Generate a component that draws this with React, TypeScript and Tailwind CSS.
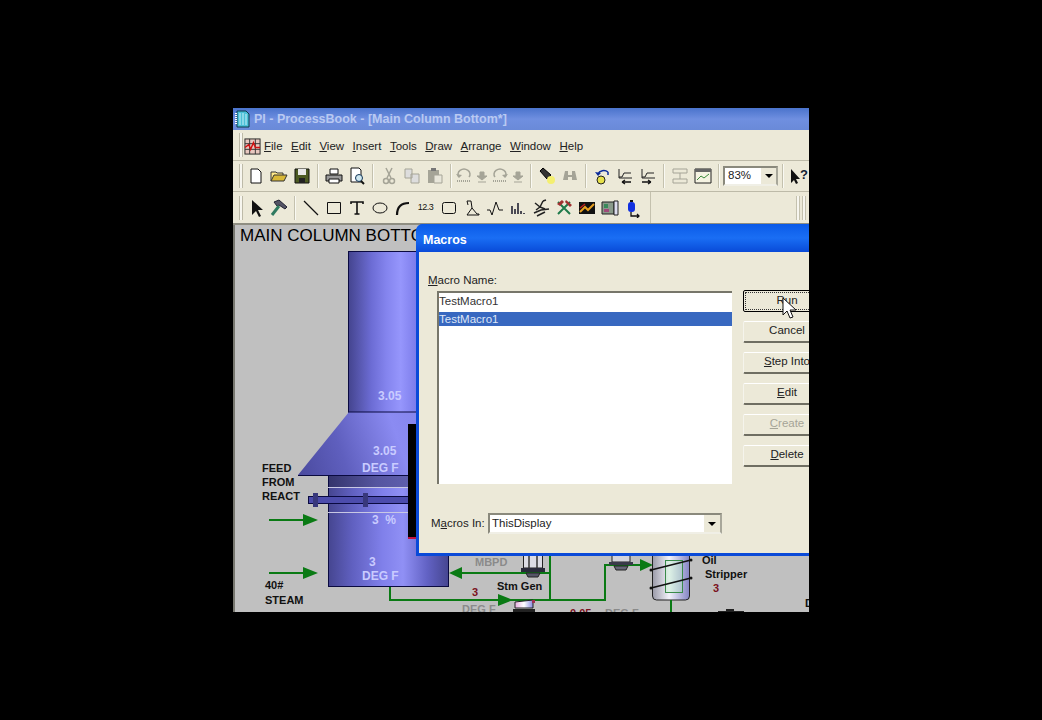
import type { ReactNode } from "react";

const ui = { fontFamily: '"Liberation Sans", sans-serif' };

function Slot({ children, narrow }: { children: ReactNode; narrow?: boolean }) {
  return (
    <div className={`${narrow ? "w-[18px]" : "w-[23px]"} h-[23px] flex items-center justify-center shrink-0`}>
      <svg width={narrow ? 16 : 20} height="20" viewBox={narrow ? "2 0 16 20" : "0 0 20 20"}>
        {children}
      </svg>
    </div>
  );
}

function Sep({ narrow }: { narrow?: boolean }) {
  return (
    <div className={`${narrow ? "w-[8px]" : "w-[9px]"} h-[24px] flex justify-center shrink-0`}>
      <div className="w-[2px] h-full border-l border-[#c4c1ae] bg-white/70" />
    </div>
  );
}

function Grip() {
  return <div className="w-[4px] h-[24px] ml-[6px] mr-[1px] border-x border-[#bdbaa8] bg-white/60 shrink-0" />;
}

const gray = "#a5a497";

const row1: ReactNode[] = [
  <Slot key="new">
    <path d="M5 3h7l3 3v11H5z" fill="#fff" stroke="#111" />
  </Slot>,
  <Slot key="open">
    <path d="M2 15V6h5l1 1h6v2" fill="#ffe98a" stroke="#333" />
    <path d="M2 15l3-6h13l-3 6z" fill="#d8b838" stroke="#333" />
  </Slot>,
  <Slot key="save">
    <path d="M3 3h14v14H3z" fill="#4c5a22" stroke="#111" />
    <path d="M6 3h8v6H6z" fill="#e8e8e8" />
    <path d="M7 12h6v5H7z" fill="#222" />
  </Slot>,
  "sep",
  <Slot key="print">
    <path d="M6 3h8v5H6z" fill="#fff" stroke="#111" />
    <path d="M2 9h16v6H2z" fill="#999" stroke="#111" />
    <path d="M5 13h10v4H5z" fill="#fff" stroke="#111" />
  </Slot>,
  <Slot key="preview">
    <path d="M4 2h8l2 2v12H4z" fill="#fff" stroke="#111" />
    <circle cx="12" cy="12" r="3.5" fill="#cfe8f0" stroke="#135" />
    <path d="M14 15l3 3" stroke="#111" strokeWidth="2" />
  </Slot>,
  "sep",
  <Slot key="cut">
    <path d="M7 2l5 10M13 2l-5 10" stroke={gray} strokeWidth="1.5" />
    <circle cx="7" cy="15" r="2.5" fill="none" stroke={gray} strokeWidth="1.5" />
    <circle cx="13" cy="15" r="2.5" fill="none" stroke={gray} strokeWidth="1.5" />
  </Slot>,
  <Slot key="copy">
    <path d="M3 3h7v9H3zM9 8h8v9H9z" fill="#ddd" stroke={gray} />
  </Slot>,
  <Slot key="paste">
    <path d="M3 4h11v13H3z" fill={gray} />
    <path d="M6 2h5v3H6z" fill="#777" />
    <path d="M9 9h8v8H9z" fill="#e8e6da" stroke={gray} />
  </Slot>,
  "sep",
  <Slot key="undo" narrow>
    <path d="M5 11a6 5 0 1 1 10 0" fill="none" stroke={gray} strokeWidth="1.5" />
    <path d="M2 8l3 4 3-3z" fill={gray} />
    <path d="M3 15h14" stroke={gray} strokeDasharray="1 1" strokeWidth="2" />
  </Slot>,
  <Slot key="undo2" narrow>
    <path d="M8 6h4v4h3l-5 4-5-4h3zM6 16h8" fill={gray} stroke={gray} />
  </Slot>,
  <Slot key="redo" narrow>
    <path d="M5 11a6 5 0 1 1 10 0" fill="none" stroke={gray} strokeWidth="1.5" />
    <path d="M18 8l-3 4-3-3z" fill={gray} />
    <path d="M3 15h14" stroke={gray} strokeDasharray="1 1" strokeWidth="2" />
  </Slot>,
  <Slot key="redo2" narrow>
    <path d="M8 6h4v4h3l-5 4-5-4h3zM6 16h8" fill={gray} stroke={gray} />
  </Slot>,
  "sep8",
  <Slot key="torch">
    <path d="M3 5l3-3 8 7-4 4z" fill="#333" stroke="#000" />
    <circle cx="14" cy="14" r="4" fill="#f4ef70" />
  </Slot>,
  <Slot key="binoculars">
    <path d="M5 5h3v4h4V5h3l2 9h-5v-3H8v3H3z" fill={gray} />
  </Slot>,
  "sep",
  <Slot key="trend">
    <path d="M6 8a6 5 0 0 1 10-2M16 6v3" fill="none" stroke="#0a2a9a" strokeWidth="1.5" />
    <path d="M3 6l3 4 3-3z" fill="#0a2a9a" />
    <circle cx="9" cy="14" r="4" fill="#e6e04a" stroke="#222" />
  </Slot>,
  <Slot key="back">
    <path d="M4 12V3M4 11h3l2-4h7M4 12h13" fill="none" stroke="#222" />
    <path d="M7 16h9M7 16l3-2M7 16l3 2" stroke="#111" fill="none" strokeWidth="1.3" />
  </Slot>,
  <Slot key="fwd">
    <path d="M4 12V3M4 11h3l2-4h7M4 12h13" fill="none" stroke="#222" />
    <path d="M4 16h9M13 16l-3-2M13 16l-3 2" stroke="#111" fill="none" strokeWidth="1.3" />
  </Slot>,
  "sep",
  <Slot key="align">
    <path d="M3 3h14v4H3zM3 13h14v4H3zM10 7v6" fill="none" stroke={gray} />
  </Slot>,
  <Slot key="chart">
    <path d="M2 3h16v14H2z" fill="#f5f3e2" stroke="#222" />
    <path d="M2 3h16v3H2z" fill="#666" />
    <path d="M4 14l4-4 3 2 5-4" fill="none" stroke="#3a8a3a" />
  </Slot>,
];

const row2: ReactNode[] = [
  <Slot key="pointer">
    <path d="M6 2v15l4-4 3 6 2-1-3-6h5z" fill="#111" />
  </Slot>,
  <Slot key="hammer">
    <path d="M5 4l5-2 8 7-2 2-6-4-2 1z" fill="#556" stroke="#223" />
    <path d="M10 8l-7 9" stroke="#2f7a60" strokeWidth="3" />
  </Slot>,
  "sep",
  <Slot key="line">
    <path d="M3 3l14 14" stroke="#111" strokeWidth="1.3" />
  </Slot>,
  <Slot key="rect">
    <path d="M3.500 4.500h13v11h-13z" fill="none" stroke="#111" />
  </Slot>,
  <Slot key="text">
    <path d="M4 6V4h12v2M10 4v12M7.500 16h5" fill="none" stroke="#111" strokeWidth="1.6" />
  </Slot>,
  <Slot key="ellipse">
    <ellipse cx="10" cy="10" rx="7" ry="5" fill="none" stroke="#111" />
  </Slot>,
  <Slot key="arc">
    <path d="M4 17C4 9 8 5 16 5" fill="none" stroke="#111" strokeWidth="2.2" />
  </Slot>,
  <div key="num" className="w-[23px] h-[23px] flex items-center justify-center shrink-0 text-[9px] text-[#111] tracking-[-0.5px]">
    12.3
  </div>,
  <Slot key="rrect">
    <rect x="3.500" y="4.500" width="13" height="11" rx="2" fill="none" stroke="#111" />
  </Slot>,
  <Slot key="conn">
    <path d="M5 3h4l1 7 5 6h2v1H5l5-7M5 3l1 4" fill="none" stroke="#111" />
  </Slot>,
  <Slot key="wave">
    <path d="M2 12h3l2 5 4-13 3 8h4" fill="none" stroke="#111" />
  </Slot>,
  <Slot key="bars">
    <path d="M4 16V8M7 16v-5M10 16V5M13 16v-3M16 16v-1" stroke="#223" strokeWidth="1.6" />
  </Slot>,
  <Slot key="run">
    <path d="M4 5l5 4M9 9l3-6M9 9l-4 3M9 9l5 2M12 3l3-1M3 15l7-3 8-1M6 18l8-4" fill="none" stroke="#222" strokeWidth="1.5" />
  </Slot>,
  <Slot key="tools">
    <path d="M4 4l12 12M16 4L4 16" stroke="#1e7a4a" strokeWidth="2" />
    <path d="M3 6l5-4 2 2-4 4zM12 2l6 5-2 2-5-5z" fill="#a03030" />
  </Slot>,
  <Slot key="trendbox">
    <path d="M2 4h16v12H2z" fill="#111" />
    <path d="M3 14l5-5 3 3 6-6" fill="none" stroke="#e8a020" strokeWidth="2" />
    <path d="M3 10l5-4" stroke="#c02020" strokeWidth="1.5" />
  </Slot>,
  <Slot key="pics">
    <path d="M2 4h12v12H2z" fill="#8a9a8a" stroke="#222" />
    <path d="M4 6h4v4H4z" fill="#3a8a5a" />
    <path d="M4 11h5v3H4z" fill="#a04a7a" />
    <path d="M14 3h4v14h-4z" fill="#dde" stroke="#222" />
  </Slot>,
  <Slot key="tag">
    <path d="M7 2h3v2H7z" fill="#111" />
    <rect x="5" y="4" width="7" height="10" rx="3" fill="#1030e0" />
    <path d="M8 14v4h8M14 16l2 2-2 2" fill="none" stroke="#111" strokeWidth="1.3" />
  </Slot>,
];

function Row({ items }: { items: ReactNode[] }) {
  return (
    <>
      {items.map((item, i) =>
        item === "sep" ? <Sep key={i} /> : item === "sep8" ? <Sep key={i} narrow /> : item
      )}
    </>
  );
}

function Btn({
  accent,
  rest,
  disabled,
  focus,
}: {
  accent: string;
  rest: string;
  disabled?: boolean;
  focus?: boolean;
}) {
  return (
    <div
      className={`w-[88px] h-[22px] rounded-[2px] flex items-center justify-center text-[11.5px] shrink-0 ${
        focus
          ? "border border-black p-[1px]"
          : "pb-[2px] border-b-2 border-b-[#6f6e62] border-t border-t-white border-x border-x-[#f5f4ec]"
      } ${disabled ? "text-[#a5a497]" : "text-[#222]"}`}
    >
      <div className={`w-full h-full flex items-center justify-center ${focus ? "border border-dotted border-[#333]" : ""}`}>
        <span>
          <span className="underline">{accent}</span>
          {rest}
        </span>
      </div>
    </div>
  );
}

function Diagram() {
  const labelWhite = { fill: "#c9cbff", fontWeight: 700, fontSize: 12 };
  const labelBlack = { fill: "#111", fontWeight: 700, fontSize: 11 };
  const grayLabel = { fill: "#8a8a8a", fontWeight: 700, fontSize: 11 };
  const redLabel = { fill: "#7a1020", fontWeight: 700, fontSize: 11 };
  const green = "#0a7a14";
  return (
    <svg
      className="absolute left-0 top-0"
      width="576"
      height="387"
      viewBox="233 225 576 387"
      style={{ fontFamily: '"Liberation Sans", sans-serif' }}
    >
      <defs>
        <linearGradient id="col" gradientUnits="userSpaceOnUse" x1="349" x2="438" y1="0" y2="0">
          <stop offset="0" stopColor="#454590" />
          <stop offset="0.12" stopColor="#5858b0" />
          <stop offset="0.25" stopColor="#6c6cd4" />
          <stop offset="0.42" stopColor="#8484ee" />
          <stop offset="0.58" stopColor="#9696fc" />
          <stop offset="0.76" stopColor="#7c7cea" />
          <stop offset="1" stopColor="#5c5cc0" />
        </linearGradient>
        <linearGradient id="low" gradientUnits="userSpaceOnUse" x1="328" x2="449" y1="0" y2="0">
          <stop offset="0" stopColor="#45458f" />
          <stop offset="0.2" stopColor="#6060c0" />
          <stop offset="0.45" stopColor="#8080ea" />
          <stop offset="0.62" stopColor="#9090f5" />
          <stop offset="0.82" stopColor="#6262c4" />
          <stop offset="1" stopColor="#45458f" />
        </linearGradient>
        <linearGradient id="band" x1="0" x2="1" y1="0" y2="0">
          <stop offset="0" stopColor="#34346c" />
          <stop offset="0.4" stopColor="#55559f" />
          <stop offset="1" stopColor="#6a6ac0" />
        </linearGradient>
        <linearGradient id="cone" gradientUnits="userSpaceOnUse" x1="298" x2="480" y1="475" y2="412">
          <stop offset="0" stopColor="#4a4a9e" />
          <stop offset="0.25" stopColor="#5f5fbe" />
          <stop offset="0.55" stopColor="#8b8bf2" />
          <stop offset="1" stopColor="#7a7ae0" />
        </linearGradient>
        <linearGradient id="strip" x1="0" x2="1" y1="0" y2="0">
          <stop offset="0" stopColor="#9a9aa8" />
          <stop offset="0.45" stopColor="#f2f2fa" />
          <stop offset="1" stopColor="#8484c4" />
        </linearGradient>
        <linearGradient id="tanker" x1="0" x2="1" y1="0" y2="0">
          <stop offset="0" stopColor="#e8b0e0" />
          <stop offset="0.5" stopColor="#ffffff" />
          <stop offset="1" stopColor="#8888e0" />
        </linearGradient>
      </defs>

      <rect x="348.500" y="251.500" width="90" height="161" fill="url(#col)" stroke="#0a0a40" />
      <path d="M349 412 L298 475 H500 L450 412 Z" fill="url(#cone)" />
      <path d="M349 412H450" stroke="#0a0a40" />
      <rect x="328.500" y="475.500" width="120" height="111" fill="url(#low)" stroke="#0a0a40" />
      <rect x="329" y="476" width="119" height="11" fill="url(#band)" />
      <path d="M298 475.500H450" stroke="#0a0a40" />
      <path d="M328 487.500H410M328 512.500H410" stroke="#c8c8e4" />
      <rect x="308.500" y="496.500" width="100" height="7" fill="#4c4cac" stroke="#0a0a40" />
      <rect x="313" y="493" width="5" height="14" fill="#38387c" />
      <rect x="363" y="493" width="5" height="14" fill="#38387c" />
      <rect x="408" y="424" width="10" height="113" fill="#000" />
      <rect x="408" y="537" width="10" height="2" fill="#c01040" />

      <text x="378" y="400" style={labelWhite}>3.05</text>
      <text x="373" y="455" style={labelWhite}>3.05</text>
      <text x="362" y="472" style={labelWhite}>DEG F</text>
      <text x="372" y="524" style={labelWhite}>3 &nbsp;%</text>
      <text x="369" y="566" style={labelWhite}>3</text>
      <text x="362" y="580" style={labelWhite}>DEG F</text>

      <text x="262" y="472" style={labelBlack}>FEED</text>
      <text x="262" y="486" style={labelBlack}>FROM</text>
      <text x="262" y="500" style={labelBlack}>REACT</text>
      <text x="265" y="589" style={labelBlack}>40#</text>
      <text x="265" y="604" style={labelBlack}>STEAM</text>

      <path d="M269 520h35M269 573h35" stroke={green} strokeWidth="2" />
      <path d="M303 514l15 6-15 6zM303 567l15 6-15 6z" fill={green} />

      <path d="M390 587v13h115M462 573h88M550 556v44M505 600h100V565h37" fill="none" stroke={green} strokeWidth="2" />
      <path d="M449 573l13-6v12zM498 594l15 6-15 6zM640 559l13 6-13 6z" fill={green} />

      <text x="475" y="566" style={grayLabel}>MBPD</text>
      <text x="497" y="590" style={labelBlack}>Stm Gen</text>
      <text x="472" y="596" style={redLabel}>3</text>
      <text x="462" y="613" style={grayLabel}>DEG F</text>
      <text x="570" y="617" style={redLabel}>0.05</text>
      <text x="605" y="617" style={grayLabel}>DEG F</text>

      <path d="M523.500 552h19v16h-19z" fill="#dcdce4" stroke="#222" />
      <path d="M529 552v16M537 552v16" stroke="#333" strokeWidth="1.5" />
      <path d="M521 568h24v4h-24z" fill="#2a2a3a" />
      <path d="M526 573h14l-2 4h-10z" fill="#556" stroke="#222" />

      <path d="M515 602l18-2v8h-18z" fill="url(#tanker)" stroke="#222" />
      <path d="M513 609h22v4h-22z" fill="#222" />
      <path d="M532 600h3v3h-3z" fill="#a03050" />

      <path d="M612 552h18v10h-18z" fill="#d4d4dc" stroke="#222" />
      <path d="M609 562h24v3h-24z" fill="#3a3a4a" />
      <path d="M614 566h14l-2 4h-10z" fill="#667" stroke="#222" />

      <rect x="652.500" y="550" width="37" height="50" rx="4" fill="url(#strip)" stroke="#222" />
      <rect x="665.500" y="560.500" width="17" height="32" fill="#b8f0c0" fillOpacity="0.35" stroke="#3a8a4a" />
      <path d="M651 570l40-10M651 588l40-10" stroke="#111" strokeWidth="1.6" />
      <path d="M671 600v12" stroke={green} strokeWidth="2" />
      <circle cx="651" cy="570" r="1.500" fill="#111" />
      <circle cx="691" cy="560" r="1.500" fill="#111" />
      <circle cx="651" cy="588" r="1.500" fill="#111" />
      <circle cx="691" cy="578" r="1.500" fill="#111" />

      <text x="702" y="564" style={labelBlack}>Oil</text>
      <text x="705" y="578" style={labelBlack}>Stripper</text>
      <text x="713" y="592" style={redLabel}>3</text>
      <text x="805" y="607" style={labelBlack}>D</text>
      <path d="M718 612h26M726 610h8" stroke="#222" strokeWidth="2" />
    </svg>
  );
}

export default function App() {
  return (
    <div className="w-[1042px] h-[720px] bg-black pl-[233px] pt-[108px] overflow-hidden">
      <div className="relative w-[576px] h-[504px] overflow-hidden bg-[#ece9d8] flex flex-col" style={ui}>
        {/* title bar */}
        <div className="h-[22px] shrink-0 flex items-center pl-[2px] gap-[3px] bg-gradient-to-b from-[#4a73cc] via-[#6f8fe0] to-[#6a8ad8]">
          <svg width="16" height="18" viewBox="0 0 16 18">
            <path d="M2 1h9l3 3v13H2z" fill="#4cc0d8" stroke="#0b3a4a" />
            <path d="M1 3v12" stroke="#fff" strokeWidth="2" strokeDasharray="1 1" />
            <path d="M5 3v12M8 3v12M11 4v11" stroke="#c8f0f8" />
          </svg>
          <span className="text-[12.5px] font-bold text-[#b9c9f2] whitespace-nowrap">
            PI - ProcessBook - [Main Column Bottom*]
          </span>
        </div>

        {/* menu */}
        <div className="h-[31px] shrink-0 flex items-center border-b border-[#bdbaa8] text-[11.5px] text-[#222]">
          <Grip />
          <svg width="17" height="17" viewBox="0 0 18 18" className="mr-[3px] mt-[3px]">
            <rect x="1" y="1" width="16" height="16" fill="#e8c8c0" stroke="#222" />
            <path d="M6 1v16M12 1v16M1 6h16M1 12h16" stroke="#333" />
            <path d="M1 10l4-3 2 5 3-7 2 5h5" stroke="#d01010" fill="none" strokeWidth="1.500" />
          </svg>
          <div className="flex gap-[8.5px] pt-[3px]">
            <span><span className="underline">F</span>ile</span>
            <span><span className="underline">E</span>dit</span>
            <span><span className="underline">V</span>iew</span>
            <span><span className="underline">I</span>nsert</span>
            <span><span className="underline">T</span>ools</span>
            <span><span className="underline">D</span>raw</span>
            <span><span className="underline">A</span>rrange</span>
            <span><span className="underline">W</span>indow</span>
            <span><span className="underline">H</span>elp</span>
          </div>
        </div>

        {/* toolbars */}
        <div className="h-[31px] shrink-0 flex items-center border-b border-[#bdbaa8]">
          <Grip />
          <Row items={row1} />
          <Sep />
          <div className="w-[55px] h-[20px] shrink-0 bg-white border-2 border-[#8a897c] border-b-[#f0efe6] border-r-[#a8a79a] flex items-center justify-between text-[11.5px] text-[#222] pl-[3px]">
            83%
            <div className="w-[15px] h-full bg-[#ece9d8] flex items-center justify-center">
              <div className="w-0 h-0 border-x-[4px] border-x-transparent border-t-[4px] border-t-black" />
            </div>
          </div>
          <Sep />
          <Slot>
            <path d="M2 3v14l3-3 2 4 2-1-2-4h4z" fill="#111" />
            <text x="11" y="13" fontSize="13" fontWeight="700" fill="#123">?</text>
          </Slot>
        </div>
        <div className="h-[33px] shrink-0 flex items-center border-b-2 border-[#8f8e82]">
          <Grip />
          <Row items={row2} />
          <div className="ml-[6px] h-full w-[1px] bg-[#c4c1ae]" />
          <div className="ml-auto mr-[2px] w-[4px] h-[24px] border-x border-[#c4c1ae] bg-white/60" />
          <div className="mr-[3px] w-[4px] h-[24px] border-x border-[#c4c1ae] bg-white/60" />
        </div>

        {/* display canvas */}
        <div className="flex-1 bg-[#c0c0c0] border-l-2 border-l-[#77776f]" />
        <div className="absolute left-0 top-[117px]">
          <Diagram />
        </div>
        <div className="absolute left-[7px] top-[118px] text-[17px] leading-[20px] text-black whitespace-nowrap">
          MAIN COLUMN BOTTOM
        </div>

        {/* Macros dialog */}
        <div className="absolute left-[183px] top-[116px] w-[420px] h-[332px] flex flex-col bg-[#0a4ad8] rounded-t-[7px] px-[3px] pb-[3px]">
          <div className="h-[28px] shrink-0 flex items-center -mx-[3px] pl-[7px] pt-[4px] rounded-t-[7px] bg-gradient-to-b from-[#0a5ae8] via-[#1a6ef4] to-[#0a4ad8] text-white text-[12.5px] font-bold">
            Macros
          </div>
          <div className="flex-1 bg-[#ece9d8] text-[11.5px] text-[#222] flex pt-[20px] pl-[9px]">
            <div className="w-[315px] shrink-0 flex flex-col">
              <div className="leading-[16px] mb-[3px]">
                <span className="underline">M</span>acro Name:
              </div>
              <div className="ml-[9px] w-[295px] h-[21px] bg-white border-t-2 border-l-2 border-[#77766a] leading-[17px] text-[#333]">
                TestMacro1
              </div>
              <div className="ml-[9px] w-[295px] h-[172px] bg-white border-l-2 border-[#77766a]">
                <div className="h-[14px] bg-[#3868c0] text-[#dfe6f6] leading-[14px]">TestMacro1</div>
              </div>
              <div className="flex items-center mt-[29px] ml-[3px]">
                <div className="w-[57px] whitespace-nowrap">
                  M<span className="underline">a</span>cros In:
                </div>
                <div className="w-[234px] h-[21px] bg-white border-2 border-[#8a897c] border-b-[#f0efe6] border-r-[#a8a79a] flex items-center justify-between pl-[2px]">
                  ThisDisplay
                  <div className="w-[16px] h-[17px] bg-[#ece9d8] flex items-center justify-center">
                    <div className="w-0 h-0 border-x-[4px] border-x-transparent border-t-[4px] border-t-black" />
                  </div>
                </div>
              </div>
            </div>
            <div className="mt-[18px] flex flex-col gap-[9px]">
              <Btn accent="" rest="Run" focus />
              <Btn accent="" rest="Cancel" />
              <Btn accent="S" rest="tep Into" />
              <Btn accent="E" rest="dit" />
              <Btn accent="C" rest="reate" disabled />
              <Btn accent="D" rest="elete" />
            </div>
          </div>
        </div>

        {/* mouse cursor */}
        <svg className="absolute left-[549px] top-[189px]" width="16" height="24" viewBox="0 0 16 24">
          <path d="M1 1v17l4-4 3 7 3-1-3-7h6z" fill="#fff" stroke="#111" />
        </svg>
      </div>
    </div>
  );
}
